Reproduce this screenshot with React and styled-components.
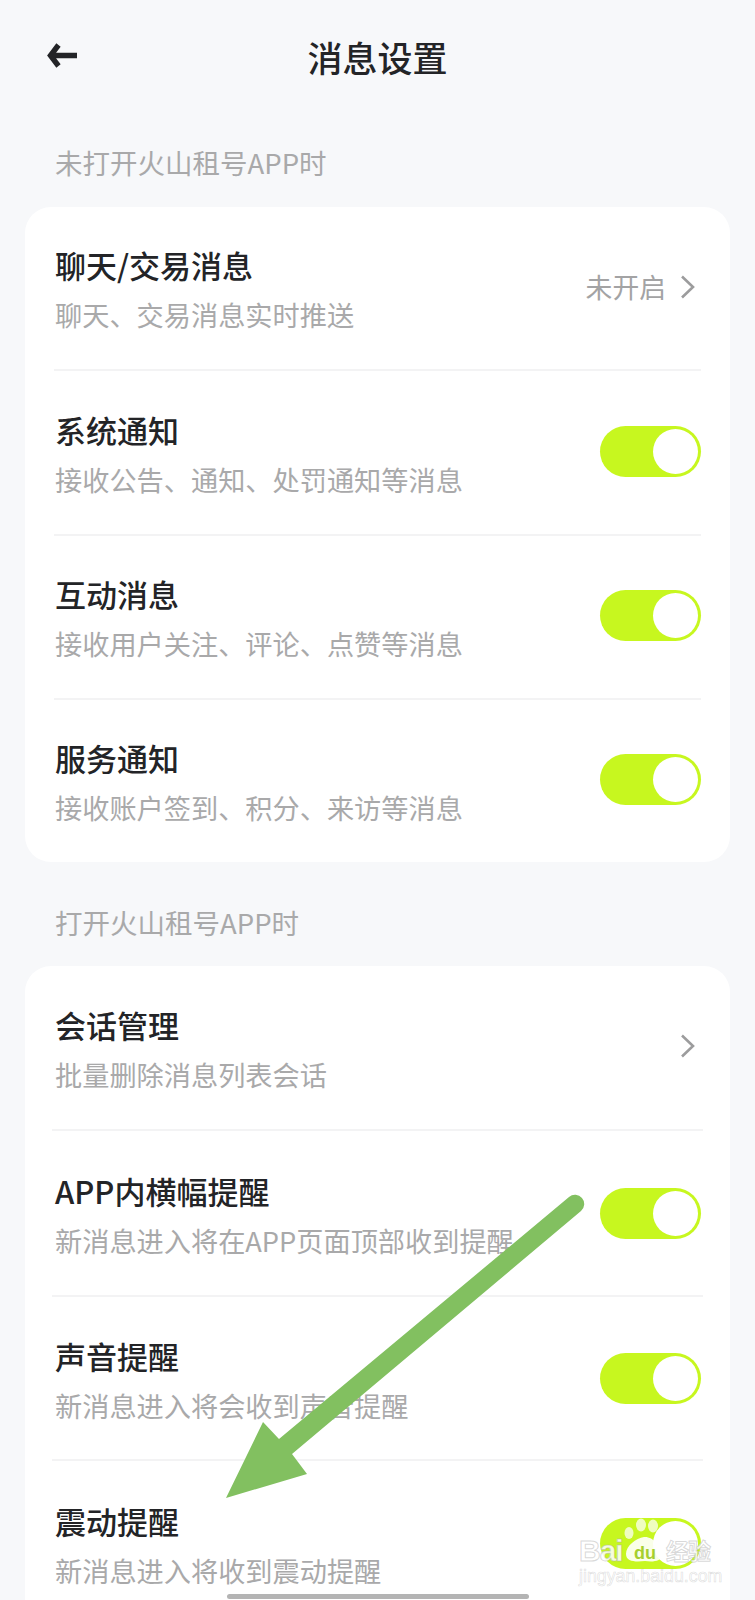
import React from "react";
import styled, { createGlobalStyle } from "styled-components";

const GlobalStyle = createGlobalStyle`
  html, body { margin: 0; padding: 0; background: #f7f8fa; }
  body { font-family: "Noto Sans CJK SC", "Noto Sans", sans-serif; }
`;

const Page = styled.div`
  position: relative;
  width: 755px;
  height: 1600px;
  overflow: hidden;
  background: #f7f8fa;
  display: flex;
  flex-direction: column;
  padding: 0 25px;
  box-sizing: border-box;
`;

const Header = styled.header`
  height: 116px;
  box-sizing: border-box;
  padding-bottom: 2px;
  display: flex;
  align-items: center;
  justify-content: center;
  position: relative;
  flex: none;
`;

const BackButton = styled.button`
  position: absolute;
  left: 21px;
  top: 42px;
  width: 32px;
  height: 28px;
  padding: 0;
  border: 0;
  background: none;
  display: flex;
`;

const Title = styled.h1`
  margin: 0;
  font-size: 35px;
  line-height: 44px;
  font-weight: 500;
  color: #232427;
`;

const SectionLabel = styled.div`
  flex: none;
  height: ${(p) => p.$height}px;
  box-sizing: border-box;
  padding: ${(p) => p.$top || 0}px 0 0 30px;
  font-size: 27.5px;
  line-height: 34px;
  color: #a9a9aa;
`;

const Card = styled.section`
  flex: none;
  background: #fff;
  border-radius: 26px;
  margin-bottom: ${(p) => p.$gap || 0}px;
  overflow: hidden;
`;

const Row = styled.div`
  height: ${(p) => p.$height}px;
  box-sizing: border-box;
  padding: 0 29px ${(p) => p.$bottom ?? 3}px 30px;
  display: flex;
  align-items: center;
  justify-content: space-between;
`;

const RowText = styled.div`
  display: flex;
  flex-direction: column;
  gap: 12px;
  padding-top: ${(p) => p.$top}px;
  min-width: 0;
`;

const RowTitle = styled.div`
  font-size: 31px;
  line-height: 38px;
  font-weight: 500;
  color: #232427;
  white-space: nowrap;
`;

const RowSub = styled.div`
  font-size: 27.2px;
  line-height: 36px;
  color: #a9a9aa;
  white-space: nowrap;
`;

const Divider = styled.div`
  height: 2px;
  margin: 0 ${(p) => p.$inset}px;
  background: #f3f3f4;
`;

const Trailing = styled.div`
  display: flex;
  align-items: center;
  gap: 14px;
  margin-right: 6px;
  flex: none;
`;

const TrailingText = styled.span`
  font-size: 26.8px;
  line-height: 36px;
  color: #a3a3a4;
`;

const ToggleTrack = styled.div`
  flex: none;
  width: 101px;
  height: 51px;
  box-sizing: border-box;
  border-radius: 26px;
  background: #c7f71f;
  display: flex;
  justify-content: flex-end;
  align-items: center;
  padding-right: 3px;
`;

const ToggleKnob = styled.div`
  width: 45px;
  height: 45px;
  border-radius: 50%;
  background: #fff;
`;

const ArrowOverlay = styled.svg`
  position: absolute;
  left: 0;
  top: 0;
  width: 755px;
  height: 1600px;
  pointer-events: none;
`;

const HomeIndicator = styled.div`
  position: absolute;
  left: 227px;
  bottom: 1px;
  width: 302px;
  height: 5px;
  border-radius: 3px;
  background: #b4b4b4;
`;

const Watermark = styled.div`
  position: absolute;
  left: 578px;
  top: 1518px;
  width: 136px;
  height: 66px;
  color: #fff;
`;

const PawIcon = styled.svg`
  position: absolute;
  left: 44px;
  top: 0;
  width: 46px;
  height: 46px;
`;

const BrandWord = styled.span`
  position: absolute;
  left: ${(p) => p.$left}px;
  top: ${(p) => p.$top}px;
  font-family: "Liberation Sans", sans-serif;
  font-size: 30px;
  line-height: 30px;
  letter-spacing: -1px;
  font-weight: 700;
  color: rgba(255, 255, 255, 0.85);
  -webkit-text-stroke: 1px rgba(170, 170, 170, 0.45);
`;

const PawLetters = styled.span`
  position: absolute;
  left: 56px;
  top: 26px;
  font-family: "Liberation Sans", sans-serif;
  font-size: 18px;
  line-height: 18px;
  font-weight: 700;
  color: #a6cf2e;
`;

const BrandCjk = styled.span`
  position: absolute;
  left: 88px;
  top: 18px;
  font-size: 23px;
  line-height: 28px;
  letter-spacing: -1px;
  font-weight: 700;
  color: rgba(255, 255, 255, 0.85);
  -webkit-text-stroke: 1px rgba(170, 170, 170, 0.45);
`;

const BrandUrl = styled.span`
  position: absolute;
  left: 1px;
  top: 49px;
  font-family: "Liberation Sans", sans-serif;
  font-size: 17.8px;
  line-height: 18px;
  white-space: nowrap;
  color: rgba(255, 255, 255, 0.7);
  -webkit-text-stroke: 0.6px rgba(170, 170, 170, 0.4);
`;

const Toggle = () => (
  <ToggleTrack>
    <ToggleKnob />
  </ToggleTrack>
);

const Chevron = () => (
  <svg width="15" height="24" viewBox="0 0 15 24" fill="none">
    <path d="M2 1.5 L13 12 L2 22.5" stroke="#9c9c9d" strokeWidth="2.6" />
  </svg>
);

const firstGroup = [
  { title: "系统通知", sub: "接收公告、通知、处罚通知等消息", height: 163 },
  { title: "互动消息", sub: "接收用户关注、评论、点赞等消息", height: 162 },
  { title: "服务通知", sub: "接收账户签到、积分、来访等消息", height: 162 },
];

const secondGroup = [
  { title: "APP内横幅提醒", sub: "新消息进入将在APP页面顶部收到提醒", height: 164 },
  { title: "声音提醒", sub: "新消息进入将会收到声音提醒", height: 162 },
  { title: "震动提醒", sub: "新消息进入将收到震动提醒", height: 164 },
];

const SettingText = ({ title, sub, top = 5 }) => (
  <RowText $top={top}>
    <RowTitle>{title}</RowTitle>
    <RowSub>{sub}</RowSub>
  </RowText>
);

export default function App() {
  return (
    <>
      <GlobalStyle />
      <Page>
        <Header>
          <BackButton aria-label="返回">
            <svg width="32" height="28" viewBox="0 0 32 28" fill="none">
              <path
                d="M31 13.5 H5 M12.5 3 L4.5 13.5 L12.5 24"
                stroke="#232427"
                strokeWidth="5.4"
              />
            </svg>
          </BackButton>
          <Title>消息设置</Title>
        </Header>

        <SectionLabel $height={91} $top={29}>未打开火山租号APP时</SectionLabel>
        <Card $gap={43}>
          <Row $height={162}>
            <SettingText title="聊天/交易消息" sub="聊天、交易消息实时推送" />
            <Trailing>
              <TrailingText>未开启</TrailingText>
              <Chevron />
            </Trailing>
          </Row>
          {firstGroup.map((item) => (
            <React.Fragment key={item.title}>
              <Divider $inset={29} />
              <Row $height={item.height}>
                <SettingText title={item.title} sub={item.sub} />
                <Toggle />
              </Row>
            </React.Fragment>
          ))}
        </Card>

        <SectionLabel $height={61}>打开火山租号APP时</SectionLabel>
        <Card>
          <Row $height={163}>
            <SettingText title="会话管理" sub="批量删除消息列表会话" />
            <Trailing>
              <Chevron />
            </Trailing>
          </Row>
          {secondGroup.map((item) => (
            <React.Fragment key={item.title}>
              <Divider $inset={27} />
              <Row $height={item.height} $bottom={0}>
                <SettingText title={item.title} sub={item.sub} top={3} />
                <Toggle />
              </Row>
            </React.Fragment>
          ))}
        </Card>

        <ArrowOverlay viewBox="0 0 755 1600">
          <path
            d="M226 1498 L263 1422 L279 1439 L569 1197 A9 9 0 0 1 581 1211 L292 1454 L307 1474 Z"
            fill="#82c060"
          />
        </ArrowOverlay>

        <Watermark>
          <PawIcon viewBox="0 0 46 46">
            <g fill="#fff" fillOpacity="0.72">
              <ellipse cx="7" cy="15" rx="4.5" ry="6" />
              <ellipse cx="19" cy="7" rx="5" ry="6.5" />
              <ellipse cx="31" cy="8" rx="5" ry="6.5" />
              <ellipse cx="40" cy="19" rx="4.5" ry="6" />
            </g>
            <path
              d="M22 19 C30 18 40 28 40 36 C40 44 30 44 23 43 C14 44 4 44 4 36 C4 28 14 20 22 19 Z"
              fill="#fff"
              fillOpacity="0.9"
            />
          </PawIcon>
          <PawLetters>du</PawLetters>
          <BrandWord $left={1} $top={18}>Bai</BrandWord>
          <BrandCjk>经验</BrandCjk>
          <BrandUrl>jingyan.baidu.com</BrandUrl>
        </Watermark>

        <HomeIndicator />
      </Page>
    </>
  );
}
